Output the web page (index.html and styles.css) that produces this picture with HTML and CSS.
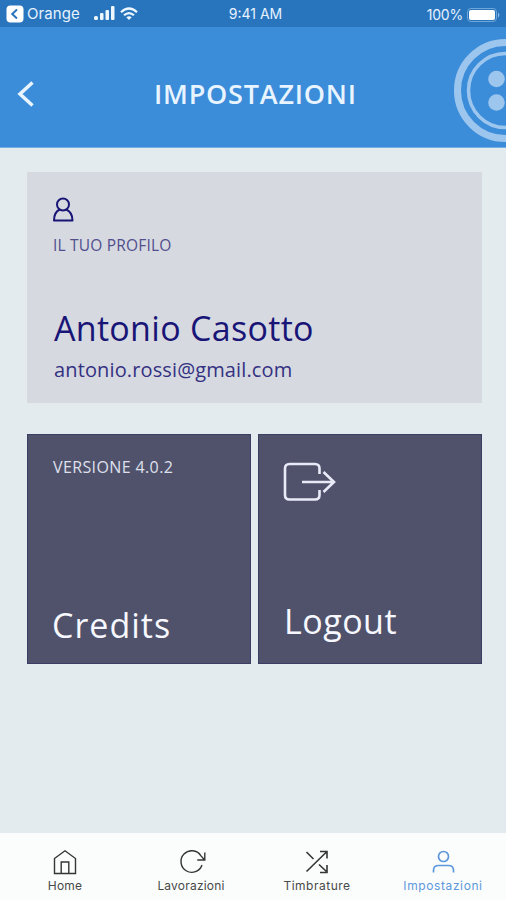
FILE: index.html
```html
<!DOCTYPE html>
<html lang="it">
<head>
<meta charset="utf-8">
<title>Impostazioni</title>
<link rel="stylesheet" href="styles.css">
</head>
<body>
<div class="status">
  <div class="carrier">
    <svg width="18" height="18" viewBox="0 0 18 18"><rect x=".5" y=".5" width="17" height="17" rx="4" fill="#fff"/><path d="M11 4.500 6.200 9l4.800 4.500" fill="none" stroke="#2875bd" stroke-width="2"/></svg>
    <span class="carrier-name">Orange</span>
    <svg class="signal" width="22" height="15" viewBox="0 0 22 15" fill="#eef7ff"><rect x="0" y="10" width="4" height="4" rx="1.500"/><rect x="6" y="7" width="3.500" height="7" rx="1"/><rect x="11.500" y="4" width="3.500" height="10" rx="1"/><rect x="17" y="0" width="3.500" height="14" rx="1"/></svg>
    <svg class="wifi" width="18" height="14" viewBox="0 0 18 14" fill="none" stroke="#eef7ff" stroke-width="2.200"><path d="M1 5.200Q9-2.200 17 5.200M4 8.300Q9 3.800 14 8.300"/><path d="M6.300 10.300Q9 8.200 11.700 10.300L9 13Z" fill="#eef7ff" stroke="none"/></svg>
  </div>
  <span class="clock">9:41 AM</span>
  <div class="power">
    <span class="percent">100%</span>
    <svg width="34" height="14" viewBox="0 0 34 14"><rect x=".5" y=".5" width="29" height="13" rx="3.500" fill="none" stroke="#6fa6d9"/><rect x="2" y="2" width="26" height="10" rx="2" fill="#fff"/><path d="M31 4.500q2.800 2.500 0 5z" fill="#8fbde8"/></svg>
  </div>
</div>
<header class="header">
  <svg class="back" width="18" height="28" viewBox="0 0 18 28"><path d="M15.500 2.500 3 14l12.500 11.500" fill="none" stroke="#e8f4ff" stroke-width="3.500"/></svg>
  <h1 class="title">IMPOSTAZIONI</h1>
  <svg class="button-logo" width="52" height="106" viewBox="0 0 52 106"><g fill="none" stroke="#9dc6ee"><circle cx="51.500" cy="52.500" r="48" stroke-width="7"/><circle cx="51.500" cy="52.500" r="37" stroke-width="3.500"/></g><g fill="#9dc6ee"><circle cx="42.500" cy="41" r="8.300"/><circle cx="42.500" cy="64.500" r="8.300"/></g></svg>
</header>
<main class="content">
  <section class="profile">
    <svg class="profile-icon" width="22" height="26" viewBox="0 0 22 26" fill="none" stroke="#191577" stroke-width="2"><circle cx="10" cy="7.500" r="6"/><path d="M6.800 12.500C3.500 14 1 17.500 1 23.500h18.500C19.500 17.500 16.500 14 13.200 12.500" stroke-linejoin="round"/></svg>
    <div class="profile-label">IL TUO PROFILO</div>
    <div class="name">Antonio Casotto</div>
    <div class="email">antonio.rossi@gmail.com</div>
  </section>
  <div class="tiles">
    <section class="tile">
      <div class="version">VERSIONE 4.0.2</div>
      <div class="tile-title credits">Credits</div>
    </section>
    <section class="tile">
      <svg class="logout-icon" width="54" height="40" viewBox="0 0 54 40" fill="none" stroke="#e9eaf8" stroke-width="2.600"><path d="M36.500 12V6.500Q36.500 2 32 2H6.500Q2 2 2 6.500v26.500Q2 37.500 6.500 37.500H32q4.500 0 4.500-4.500V28M19 20h32M40.500 10 51 20 40.500 30"/></svg>
      <div class="tile-title logout">Logout</div>
    </section>
  </div>
</main>
<nav class="tabs">
  <div class="tab">
    <svg width="24" height="26" viewBox="0 0 24 26" fill="none" stroke="#333635" stroke-width="1.400"><path d="M1.500 9.500 12 1.800l10.500 7.700v15h-21zM8.200 24.500V13h7.600v11.500"/></svg>
    <span class="tab-home">Home</span>
  </div>
  <div class="tab">
    <svg class="refresh" width="28" height="26" viewBox="0 0 28 26" fill="none" stroke="#333635" stroke-width="1.400"><path d="M23 16A10.800 10.800 0 1 1 21.800 6.600L25.200 10.500M25.800 3.500v7.500h-7.500"/></svg>
    <span class="tab-work">Lavorazioni</span>
  </div>
  <div class="tab">
    <svg width="24" height="26" viewBox="0 0 24 26" fill="none" stroke="#333635" stroke-width="1.600"><path d="M1.500 22.500 22 2.500M15 2.500h7v7M1.500 3l7 7M14 15.500l8 7.500M22 16v7.500h-7"/></svg>
    <span class="tab-time">Timbrature</span>
  </div>
  <div class="tab active">
    <svg width="24" height="26" viewBox="0 0 24 26" fill="none" stroke="#5d98dc" stroke-width="1.700"><circle cx="12.500" cy="7.500" r="5"/><path d="M2.500 23.500v-2Q2.500 16.500 7.500 16.500h10q5 0 5 5v2"/></svg>
    <span class="tab-settings">Impostazioni</span>
  </div>
</nav>
</body>
</html>
```
FILE: styles.css
```css
* { box-sizing: border-box; }
body {
  margin: 0;
  width: 506px;
  height: 900px;
  display: flex;
  flex-direction: column;
  overflow: hidden;
  background: #e3ebef;
  font-family: "Open Sans", "Noto Sans", sans-serif;
  white-space: nowrap;
}
svg { display: block; flex: none; }
.status {
  height: 27px;
  display: grid;
  grid-template-columns: 1fr 60px 1fr;
  align-items: center;
  padding: 0 5px 0 6px;
  background: #2875bd;
  color: #e6f2ff;
  font-family: Inter, sans-serif;
  font-size: 15px;
}
.carrier, .power { display: flex; align-items: center; }
.carrier-name { margin-left: 3px; width: 67px; letter-spacing: .1px; }
.wifi { margin-left: 4px; }
.clock { justify-self: center; margin-left: 4px; font-size: 14px; }
.power { justify-content: flex-end; gap: 4px; padding-top: 2px; }
.percent { font-size: 14px; letter-spacing: -.2px; }
.header {
  height: 121px;
  display: flex;
  align-items: center;
  background: #3b8cd9;
  border-bottom: 1px solid #75afe3;
}
.back { margin: 13px 0 0 17px; }
.title {
  margin: 14px 0 0 119px;
  width: 300px;
  color: #e8f4ff;
  font-size: 27px;
  line-height: 32px;
  font-weight: 600;
  letter-spacing: .78px;
}
.button-logo { margin-top: 7px; }
.content { flex: 1; padding: 24px 24px 0 27px; }
.profile {
  height: 231px;
  padding: 25px 26px 0;
  background: #d7d9e1;
  color: #191577;
}
.profile-label {
  margin-top: 11px;
  font-size: 15.500px;
  line-height: 22px;
  letter-spacing: .2px;
  color: #504e8d;
}
.name {
  margin: 50px 0 0 1px;
  font-size: 34px;
  line-height: 44px;
  letter-spacing: .3px;
}
.email {
  margin: 6px 0 0 1px;
  font-size: 20px;
  line-height: 28px;
  letter-spacing: .13px;
  color: #343181;
}
.tiles {
  margin-top: 31px;
  display: grid;
  grid-template-columns: 1fr 1fr;
  gap: 7px;
}
.tile {
  height: 230px;
  display: flex;
  flex-direction: column;
  justify-content: space-between;
  padding: 22px 24px 16px;
  background: #50526b;
  border: 1px solid #3c3d62;
  color: #f7f8ff;
}
.version {
  margin-left: 1px;
  font-size: 16px;
  line-height: 20px;
  letter-spacing: .38px;
  color: #dfe0ee;
}
.tile-title { font-size: 34px; line-height: 44px; }
.logout-icon { margin-top: 5px; }
.credits { letter-spacing: 1px; }
.logout { margin: 0 0 4px 1px; letter-spacing: .5px; }
.tabs {
  height: 67px;
  display: flex;
  padding: 16px 0 0 2px;
  background: #fbfdfd;
}
.tab {
  width: 126px;
  display: flex;
  flex-direction: column;
  align-items: center;
  font-family: Inter, sans-serif;
  font-size: 12px;
  line-height: 16px;
  color: #474948;
}
.tab span { margin-top: 3px; }
.refresh { margin-left: 4px; }
.tab-home { letter-spacing: .2px; }
.tab-work { letter-spacing: .2px; }
.tab-time { letter-spacing: .5px; }
.tab-settings { letter-spacing: .6px; }
.active { color: #5d98dc; }
```
